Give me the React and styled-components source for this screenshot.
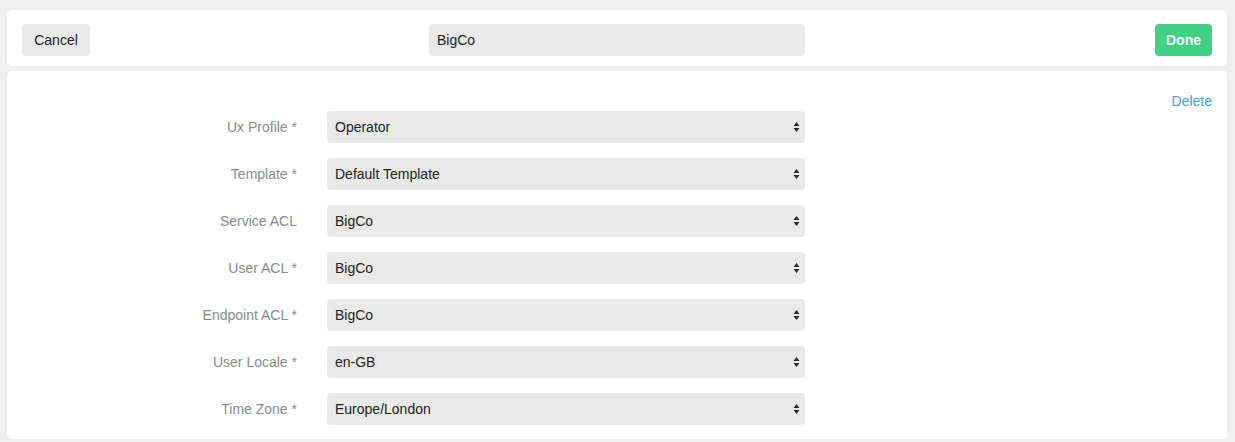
import styled, { createGlobalStyle } from "styled-components";

const GlobalStyle = createGlobalStyle`
  * { box-sizing: border-box; }
  body {
    margin: 0;
    background: #efefef;
    font-family: "Liberation Sans", Arial, sans-serif;
    font-size: 14px;
    color: #222;
  }
`;

const fields = [
  { label: "Ux Profile *", value: "Operator" },
  { label: "Template *", value: "Default Template" },
  { label: "Service ACL", value: "BigCo" },
  { label: "User ACL *", value: "BigCo" },
  { label: "Endpoint ACL *", value: "BigCo" },
  { label: "User Locale *", value: "en-GB" },
  { label: "Time Zone *", value: "Europe/London" },
];

const SortArrows = () => (
  <svg width="7" height="12" viewBox="0 0 7 12">
    <path d="M3.5 1 L6.5 5 L0.5 5 Z" fill="#2a2a2a" />
    <path d="M3.5 11 L6.5 7 L0.5 7 Z" fill="#2a2a2a" />
  </svg>
);

const App = () => {
  return (
    <Page>
      <GlobalStyle />
      <Header>
        <Left>
          <CancelButton>Cancel</CancelButton>
        </Left>
        <NameInput>BigCo</NameInput>
        <Right>
          <DoneButton>Done</DoneButton>
        </Right>
      </Header>
      <Panel>
        <Actions>
          <DeleteLink>Delete</DeleteLink>
        </Actions>
        <Form>
          {fields.map((f) => (
            <Row key={f.label}>
              <Label>{f.label}</Label>
              <Select>
                <span>{f.value}</span>
                <SortArrows />
              </Select>
            </Row>
          ))}
        </Form>
      </Panel>
    </Page>
  );
};

export default App;

const Page = styled.div`
  padding: 10px 8px 3px 7px;
  display: flex;
  flex-direction: column;
  gap: 5px;
  width: 1235px;
`;
const Header = styled.div`
  background: #fff;
  border-radius: 5px;
  padding: 14px 15px 10px 15px;
  display: grid;
  grid-template-columns: 1fr 376px 1fr;
  align-items: center;
`;
const Left = styled.div`
  display: flex;
`;
const Right = styled.div`
  display: flex;
  justify-content: flex-end;
`;
const CancelButton = styled.div`
  height: 32px;
  width: 68px;
  display: flex;
  align-items: center;
  justify-content: center;
  background: #e9e9e9;
  border-radius: 4px;
  color: #222;
`;
const DoneButton = styled.div`
  height: 32px;
  width: 57px;
  display: flex;
  align-items: center;
  justify-content: center;
  background: #3fd283;
  border-radius: 4px;
  color: #fff;
  font-weight: bold;
`;
const NameInput = styled.div`
  height: 32px;
  display: flex;
  align-items: center;
  padding-left: 8px;
  background: #e9e9e9;
  border-radius: 4px;
`;
const Panel = styled.div`
  background: #fff;
  border-radius: 5px;
  padding: 20px 15px 14px 15px;
  display: flex;
  flex-direction: column;
`;
const Actions = styled.div`
  height: 20px;
  display: flex;
  justify-content: flex-end;
  align-items: center;
`;
const DeleteLink = styled.span`
  color: #3d9fe3;
  font-size: 14px;
`;
const Form = styled.div`
  display: flex;
  flex-direction: column;
  gap: 15px;
`;
const Row = styled.div`
  display: grid;
  grid-template-columns: 275px 478px;
  column-gap: 30px;
  align-items: center;
`;
const Label = styled.div`
  text-align: right;
  color: #8a8a8a;
`;
const Select = styled.div`
  height: 32px;
  background: #e9e9e9;
  border-radius: 4px;
  padding: 0 5px 0 8px;
  display: flex;
  align-items: center;
  justify-content: space-between;
  color: #222;
`;
